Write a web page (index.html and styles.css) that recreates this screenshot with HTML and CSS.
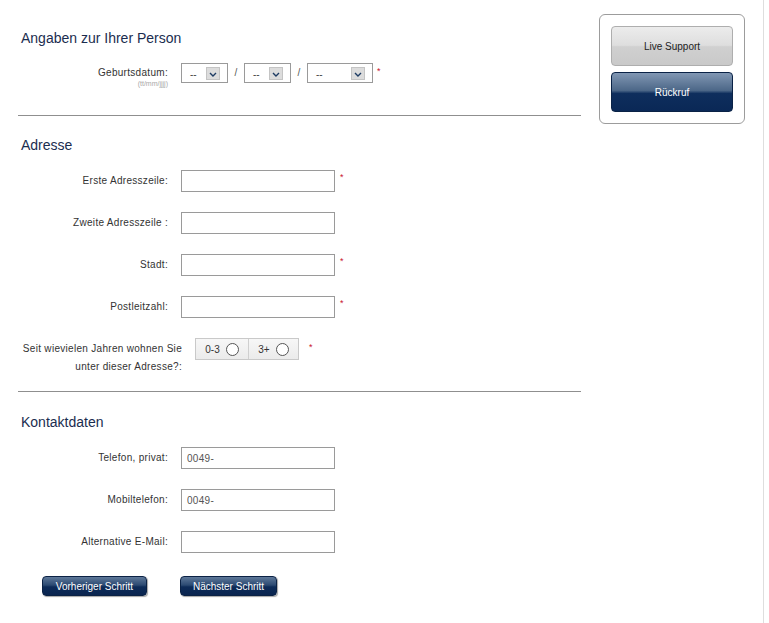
FILE: index.html
```html
<!DOCTYPE html>
<html lang="de">
<head>
  <meta charset="UTF-8">
  <meta name="viewport" content="width=device-width, initial-scale=1.0">
  <title>Persönliche Angaben</title>
  <link rel="stylesheet" href="styles.css">
</head>
<body>
  <div class="page">
    <!-- Formular -->
    <div class="main">
      <h2 class="section-title first">Angaben zur Ihrer Person</h2>
      <div class="row birth">
        <div class="label">
          <div>Geburtsdatum:</div>
          <div class="hint">(tt/mm/jjjj)</div>
        </div>
        <div class="field">
          <div class="select small"><span class="value">--</span><span class="arrow"><svg width="8" height="5" viewBox="0 0 8 5"><path d="M1 1 L4 4 L7 1" fill="none" stroke="#1d3b63" stroke-width="1.4"/></svg></span></div>
          <span class="slash">/</span>
          <div class="select small"><span class="value">--</span><span class="arrow"><svg width="8" height="5" viewBox="0 0 8 5"><path d="M1 1 L4 4 L7 1" fill="none" stroke="#1d3b63" stroke-width="1.4"/></svg></span></div>
          <span class="slash">/</span>
          <div class="select large"><span class="value">--</span><span class="arrow"><svg width="8" height="5" viewBox="0 0 8 5"><path d="M1 1 L4 4 L7 1" fill="none" stroke="#1d3b63" stroke-width="1.4"/></svg></span></div>
          <span class="req">*</span>
        </div>
      </div>

      <div class="divider"></div>

      <h2 class="section-title">Adresse</h2>
      <div class="row">
        <div class="label">Erste Adresszeile:</div>
        <div class="field"><input class="text" type="text"><span class="req">*</span></div>
      </div>
      <div class="row">
        <div class="label">Zweite Adresszeile :</div>
        <div class="field"><input class="text" type="text"></div>
      </div>
      <div class="row">
        <div class="label">Stadt:</div>
        <div class="field"><input class="text" type="text"><span class="req">*</span></div>
      </div>
      <div class="row">
        <div class="label">Postleitzahl:</div>
        <div class="field"><input class="text" type="text"><span class="req">*</span></div>
      </div>
      <div class="row years">
        <div class="label">Seit wievielen Jahren wohnen Sie<br>unter dieser Adresse?:</div>
        <div class="field">
          <div class="radio-group">
            <label class="radio-item">0-3 <span class="circle"></span></label>
            <label class="radio-item">3+ <span class="circle"></span></label>
          </div>
          <span class="req">*</span>
        </div>
      </div>

      <div class="divider second"></div>

      <h2 class="section-title">Kontaktdaten</h2>
      <div class="row">
        <div class="label">Telefon, privat:</div>
        <div class="field"><input class="text" type="text" value="0049-"></div>
      </div>
      <div class="row">
        <div class="label">Mobiltelefon:</div>
        <div class="field"><input class="text" type="text" value="0049-"></div>
      </div>
      <div class="row last">
        <div class="label">Alternative E-Mail:</div>
        <div class="field"><input class="text" type="text"></div>
      </div>

      <div class="nav">
        <button class="step prev">Vorheriger Schritt</button>
        <button class="step next">Nächster Schritt</button>
      </div>
    </div>

    <!-- Hilfe -->
    <div class="aside">
      <button class="help live">Live Support</button>
      <button class="help callback">Rückruf</button>
    </div>
  </div>
</body>
</html>
```

FILE: styles.css
```css
/* General */
body {
  margin: 0;
  font-family: 'Liberation Sans', Arial, sans-serif;
  color: #333;
  background: #fff;
}

.page {
  display: flex;
  align-items: flex-start;
  gap: 18px;
  width: 764px;
  min-height: 100vh;
  box-sizing: border-box;
  padding: 14px 0 0 18px;
  border-right: 1px solid #dedede;
}

/* Form column */
.main {
  width: 563px;
  padding-top: 16px;
}

.section-title {
  margin: 21px 0 17px;
  padding-left: 3px;
  font-size: 14px;
  line-height: 16px;
  font-weight: normal;
  color: #1b2d4f;
}

.section-title.first {
  margin-top: 0;
  margin-bottom: 17px;
}

.divider {
  height: 1px;
  background: #8f8f8f;
  margin-top: 27px;
}

.divider.second {
  margin-top: 15px;
}

.divider.second + .section-title {
  margin-top: 22px;
}

/* Rows */
.row {
  display: grid;
  grid-template-columns: 150px auto;
  column-gap: 13px;
  margin-bottom: 20px;
  font-size: 10px;
}

.row.birth,
.row.years,
.row.last {
  margin-bottom: 0;
}

.label {
  text-align: right;
  line-height: 22px;
  letter-spacing: 0.3px;
}

.birth .label {
  line-height: 20px;
}

.hint {
  font-size: 7px;
  line-height: 8px;
  margin-top: -3px;
  letter-spacing: 0;
  color: #a8a8a8;
}

.field {
  display: flex;
  align-items: flex-start;
}

.text {
  width: 154px;
  height: 22px;
  box-sizing: border-box;
  margin: 0;
  padding: 0 5px;
  border: 1px solid #9a9a9a;
  font-family: inherit;
  font-size: 10px;
  letter-spacing: 0.3px;
  color: #555;
  outline: none;
}

.req {
  color: #c8102e;
  font-size: 9px;
  line-height: 14px;
  margin-left: 5px;
}

/* Date selects */
.select {
  display: flex;
  align-items: center;
  justify-content: space-between;
  height: 20px;
  box-sizing: border-box;
  border: 1px solid #9a9a9a;
  padding: 0 7px 0 8px;
  background: #fff;
}

.select.small {
  width: 47px;
}

.select.large {
  width: 66px;
}

.select .value {
  font-size: 10px;
  color: #444;
  padding-top: 2px;
}

.select .arrow {
  display: flex;
  align-items: center;
  justify-content: center;
  width: 14px;
  height: 13px;
  box-sizing: border-box;
  background: #dcdcdc;
  border: 1px solid #c4c4c4;
  padding-top: 2px;
}

.slash {
  width: 16px;
  text-align: center;
  font-size: 10px;
  line-height: 20px;
  color: #555;
}

.birth .req {
  margin-left: 4px;
  line-height: 16px;
}

/* Years radio */
.row.years {
  grid-template-columns: 164px auto;
}

.years .label {
  line-height: 18px;
  padding-top: 2px;
}

.radio-group {
  display: flex;
  height: 22px;
  box-sizing: border-box;
  border: 1px solid #c9c9c9;
  background: linear-gradient(#f7f7f7, #ebebeb);
}

.radio-item {
  display: flex;
  align-items: center;
  justify-content: center;
  gap: 6px;
  font-size: 10px;
  color: #333;
}

.radio-item:first-child {
  width: 52px;
  border-right: 1px solid #cfcfcf;
}

.radio-item:last-child {
  width: 49px;
}

.circle {
  width: 11px;
  height: 11px;
  border: 1px solid #555;
  border-radius: 50%;
  background: #fff;
}

.years .req {
  margin-left: 10px;
  line-height: 18px;
}

/* Step buttons */
.nav {
  display: flex;
  gap: 33px;
  margin-top: 23px;
  padding-left: 24px;
}

button {
  font-family: inherit;
  cursor: pointer;
}

.step {
  height: 20px;
  padding: 0;
  border: 1px solid #0b2245;
  border-radius: 4px;
  background: linear-gradient(#5e7899 0%, #2c4a72 45%, #0d2b58 55%, #0a2550 100%);
  color: #fff;
  font-size: 10px;
  box-shadow: 1px 1px 1px rgba(0, 0, 0, 0.35);
}

.step.prev {
  width: 105px;
}

.step.next {
  width: 97px;
}

/* Help box */
.aside {
  display: flex;
  flex-direction: column;
  gap: 6px;
  width: 146px;
  box-sizing: border-box;
  padding: 11px;
  border: 1px solid #9c9c9c;
  border-radius: 6px;
}

.help {
  height: 40px;
  border-radius: 4px;
  font-size: 10px;
  padding: 0;
}

.help.live {
  border: 1px solid #aeaeae;
  background: linear-gradient(#ececec 0%, #dedede 48%, #d0d0d0 52%, #c9c9c9 100%);
  color: #222;
}

.help.callback {
  border: 1px solid #0a2246;
  background: linear-gradient(#8197b3 0%, #4c6788 46%, #0e2e5d 54%, #0a2856 100%);
  color: #fff;
}
```
